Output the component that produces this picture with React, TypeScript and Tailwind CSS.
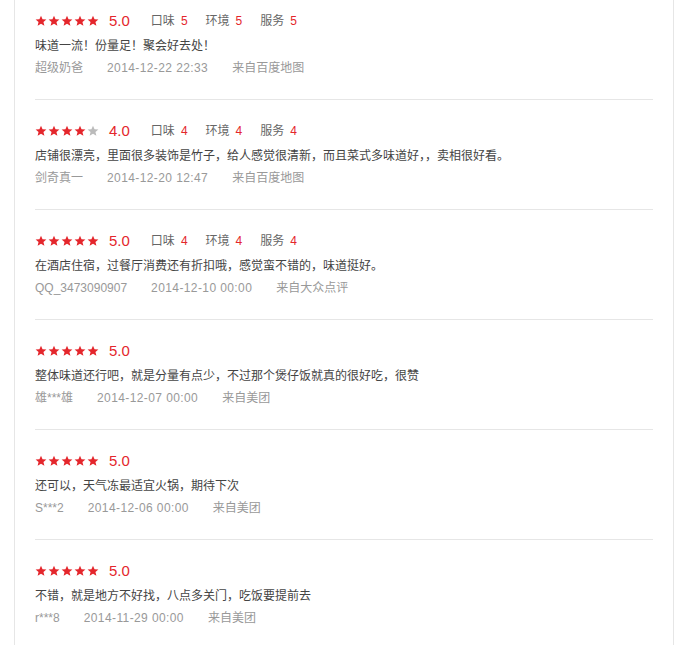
import type { FC } from "react";

type Review = {
  score: number;
  tags?: [number, number, number];
  text: string;
  user: string;
  time: string;
  source: string;
};

const reviews: Review[] = [
  {
    score: 5,
    tags: [5, 5, 5],
    text: "味道一流！份量足！聚会好去处！",
    user: "超级奶爸",
    time: "2014-12-22 22:33",
    source: "来自百度地图",
  },
  {
    score: 4,
    tags: [4, 4, 4],
    text: "店铺很漂亮，里面很多装饰是竹子，给人感觉很清新，而且菜式多味道好，，卖相很好看。",
    user: "剑奇真一",
    time: "2014-12-20 12:47",
    source: "来自百度地图",
  },
  {
    score: 5,
    tags: [4, 4, 4],
    text: "在酒店住宿，过餐厅消费还有折扣哦，感觉蛮不错的，味道挺好。",
    user: "QQ_3473090907",
    time: "2014-12-10 00:00",
    source: "来自大众点评",
  },
  {
    score: 5,
    text: "整体味道还行吧，就是分量有点少，不过那个煲仔饭就真的很好吃，很赞",
    user: "雄***雄",
    time: "2014-12-07 00:00",
    source: "来自美团",
  },
  {
    score: 5,
    text: "还可以，天气冻最适宜火锅，期待下次",
    user: "S***2",
    time: "2014-12-06 00:00",
    source: "来自美团",
  },
  {
    score: 5,
    text: "不错，就是地方不好找，八点多关门，吃饭要提前去",
    user: "r***8",
    time: "2014-11-29 00:00",
    source: "来自美团",
  },
];

const Star: FC<{ on: boolean }> = ({ on }) => (
  <svg width="12" height="12" viewBox="0 0 24 24" className="shrink-0">
    <path
      d="M12 1.5l3.1 7.1 7.7.6-5.9 5 1.9 7.5L12 17.6l-6.8 4.1 1.9-7.5-5.9-5 7.7-.6z"
      fill={on ? "#e4262c" : "#bbbbbb"}
    />
  </svg>
);

const labels = ["口味", "环境", "服务"];

const ReviewItem: FC<{ review: Review }> = ({ review }) => (
  <div className="mb-[10px] h-[100px] border-b border-[#e6e6e6] pt-[11px]">
    <div className="flex h-[20px] items-center">
      <div className="flex gap-[1px]">
        {[0, 1, 2, 3, 4].map((i) => (
          <Star key={i} on={i < review.score} />
        ))}
      </div>
      <span className="ml-[10px] text-[15px] leading-[20px] text-[#e4262c]">
        {review.score}.0
      </span>
      {review.tags && (
        <div className="ml-[21px] flex gap-[18px] text-[12px] text-[#666]">
          {review.tags.map((t, i) => (
            <span key={i}>
              {labels[i]}
              <span className="ml-[6px] text-[#e4262c]">{t}</span>
            </span>
          ))}
        </div>
      )}
    </div>
    <p className="mt-[4px] text-[12px] leading-[22px] text-[#444]">{review.text}</p>
    <div className="flex gap-[24px] text-[12px] leading-[22px] text-[#999]">
      <span>{review.user}</span>
      <span className="tracking-[0.4px]">{review.time}</span>
      <span>{review.source}</span>
    </div>
  </div>
);

export default function App() {
  return (
    <div
      className="h-[645px] w-[688px] overflow-hidden bg-white"
      style={{ fontFamily: '"Liberation Sans", "Noto Sans CJK SC", sans-serif' }}
    >
      <div className="ml-[14px] min-h-full w-[660px] border-x border-[#e6e6e6] px-[20px]">
        {reviews.map((r, i) => (
          <ReviewItem key={i} review={r} />
        ))}
      </div>
    </div>
  );
}
